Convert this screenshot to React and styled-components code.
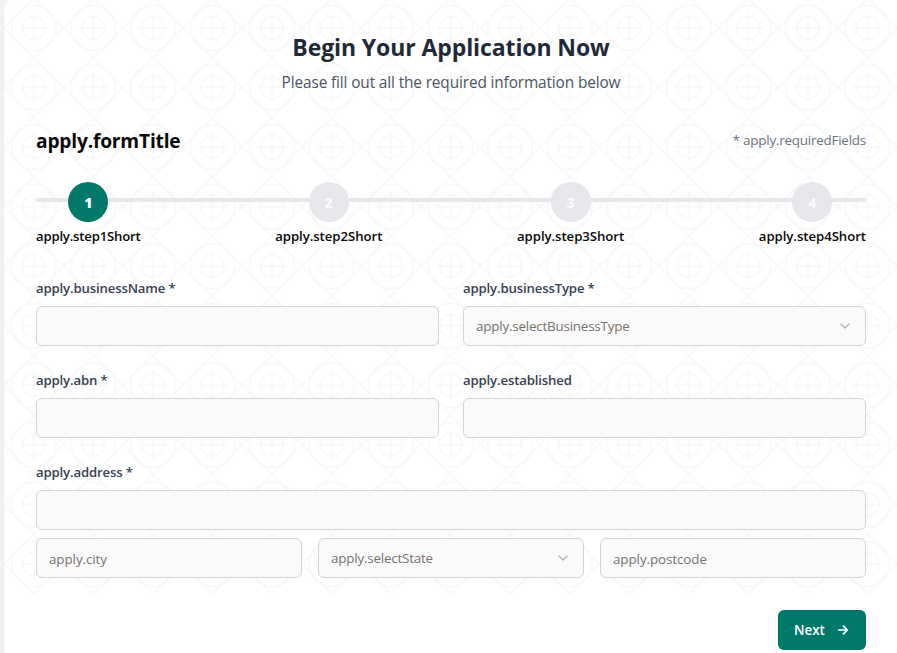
import React from 'react';
import styled, { createGlobalStyle } from 'styled-components';

const GlobalStyle = createGlobalStyle`
  *, *::before, *::after { box-sizing: border-box; }
  html, body { margin: 0; height: 653px; overflow: hidden; }
  body { background: #f3f4f6; font-family: 'Open Sans', 'Noto Sans', sans-serif; font-size: 13.4px; }
  h1, h2, p { margin: 0; }
  input, button { font: inherit; }
`;

const Card = styled.main`
  position: relative;
  margin-left: 4px;
  height: 653px;
  padding: 32px 31px 0 32px;
  background: #fff;
  border-top-left-radius: 8px;
  box-shadow: 0 4px 6px rgba(0, 0, 0, 0.06);
  overflow: hidden;
`;
const Backdrop = styled.svg`
  position: absolute;
  top: 0;
  left: 0;
  width: 893px;
  height: 595px;
  pointer-events: none;
`;
const Form = styled.form`
  position: relative;
  display: flex;
  flex-direction: column;
`;
const Intro = styled.header`
  display: flex;
  flex-direction: column;
  align-items: center;
  height: 92px;
`;
const Title = styled.h1`
  font-size: 23px;
  letter-spacing: -0.1px;
  line-height: 32px;
  margin-top: -1px;
  font-weight: 700;
  color: #1f2937;
  white-space: nowrap;
`;
const Subtitle = styled.p`
  margin-top: 8px;
  font-size: 15.4px;
  letter-spacing: -0.13px;
  line-height: 24px;
  color: #4b5563;
  white-space: nowrap;
`;
const FormHead = styled.div`
  display: flex;
  justify-content: space-between;
  align-items: center;
  height: 34px;
`;
const FormTitle = styled.h2`
  font-size: 19.2px;
  letter-spacing: -0.2px;
  line-height: 28px;
  font-weight: 700;
  color: #0a0a0a;
`;
const Required = styled.span`
  margin-top: -2px;
  letter-spacing: -0.21px;
  line-height: 20px;
  color: #6b7280;
`;
const Stepper = styled.ol`
  position: relative;
  display: flex;
  justify-content: space-between;
  list-style: none;
  margin: 24px 0 0;
  padding: 0;
  height: 64px;
  &::before {
    content: '';
    position: absolute;
    top: 16px;
    left: 0;
    right: 0;
    height: 4px;
    background: #e5e7eb;
  }
`;
const Step = styled.li`
  position: relative;
  display: flex;
  flex-direction: column;
  align-items: center;
`;
const StepDot = styled.span`
  display: flex;
  align-items: center;
  justify-content: center;
  width: 40px;
  height: 40px;
  padding-top: 1px;
  border-radius: 50%;
  background: ${(p) => (p.$active ? '#00796b' : '#e5e7eb')};
  color: ${(p) => (p.$active ? '#fff' : '#fafafa')};
  font-size: 14px;
  font-weight: 800;
`;
const StepLabel = styled.span`
  margin-top: 4px;
  font-size: 13.2px;
  letter-spacing: ${(p) => (p.$tight ? '-0.22px' : '-0.05px')};
  line-height: 20px;
  font-weight: 600;
  color: #0a0a0a;
`;
const Fields = styled.div`
  display: grid;
  grid-template-columns: 1fr 1fr;
  gap: 24px;
  margin-top: 32px;
`;
const Field = styled.div`
  display: flex;
  flex-direction: column;
  gap: 8px;
  grid-column: ${(p) => (p.$wide ? '1 / -1' : 'auto')};
`;
const Label = styled.label`
  font-size: 13.2px;
  letter-spacing: -0.16px;
  line-height: 20px;
  font-weight: 600;
  color: #374151;
`;
const Input = styled.input`
  width: 100%;
  height: 40px;
  padding: 2px 12px 0;
  border: 1px solid #d1d5db;
  border-radius: 6px;
  background: #fafafa;
  outline: none;
  &::placeholder { color: #78716c; opacity: 1; letter-spacing: -0.08px; }
`;
const Select = styled.div`
  display: flex;
  align-items: center;
  justify-content: space-between;
  height: 40px;
  padding: 0 12px;
  border: 1px solid #d1d5db;
  border-radius: 6px;
  background: #fafafa;
  color: #78716c;
  letter-spacing: -0.2px;
`;
const AddressRow = styled.div`
  display: grid;
  grid-template-columns: repeat(3, 1fr);
  gap: 16px;
`;
const Actions = styled.div`
  display: flex;
  justify-content: flex-end;
  margin-top: 32px;
`;
const NextButton = styled.button`
  display: flex;
  align-items: center;
  justify-content: space-between;
  width: 88px;
  height: 40px;
  padding: 0 15px 0 16px;
  border: 0;
  border-radius: 6px;
  background: #00796b;
  color: #fff;
  font-weight: 600;
`;

function Ornament() {
  return (
    <Backdrop aria-hidden="true">
      <defs>
        <pattern id="lattice" width="59.55" height="59.55" patternUnits="userSpaceOnUse" patternTransform="translate(0 -1.8)">
          <g fill="none" stroke="#f7f7f7" strokeWidth="1" transform="scale(1.48875)">
            <path d="M20 0 40 20 20 40 0 20Z" />
            <circle cx="20" cy="20" r="15" />
            <circle cx="20" cy="20" r="7.6" />
            <path d="M20 10v20M10 20h20" />
          </g>
        </pattern>
      </defs>
      <rect width="893" height="593.7" fill="url(#lattice)" />
    </Backdrop>
  );
}

function Chevron() {
  return (
    <svg width="16" height="16" viewBox="0 0 24 24" fill="none" stroke="#b5b1ae" strokeWidth="2" strokeLinecap="round" strokeLinejoin="round">
      <path d="m6 9 6 6 6-6" />
    </svg>
  );
}

function Arrow() {
  return (
    <svg width="16" height="16" viewBox="0 0 16 16" fill="none" stroke="#fff" strokeWidth="1.7" strokeLinecap="round" strokeLinejoin="round">
      <path d="M3.7 8h8.6M8.5 4.2 12.3 8l-3.8 3.8" />
    </svg>
  );
}

export default function App() {
  return (
    <>
      <GlobalStyle />
      <Card>
        <Ornament />
        <Form>
          <Intro>
            <Title>Begin Your Application Now</Title>
            <Subtitle>Please fill out all the required information below</Subtitle>
          </Intro>
          <FormHead>
            <FormTitle>apply.formTitle</FormTitle>
            <Required>* apply.requiredFields</Required>
          </FormHead>
          <Stepper>
            {[1, 2, 3, 4].map((n) => (
              <Step key={n}>
                <StepDot $active={n === 1}>{n}</StepDot>
                <StepLabel $tight={n === 1}>{`apply.step${n}Short`}</StepLabel>
              </Step>
            ))}
          </Stepper>
          <Fields>
            <Field>
              <Label>apply.businessName *</Label>
              <Input />
            </Field>
            <Field>
              <Label>apply.businessType *</Label>
              <Select>apply.selectBusinessType<Chevron /></Select>
            </Field>
            <Field>
              <Label>apply.abn *</Label>
              <Input />
            </Field>
            <Field>
              <Label>apply.established</Label>
              <Input />
            </Field>
            <Field $wide>
              <Label>apply.address *</Label>
              <Input />
              <AddressRow>
                <Input placeholder="apply.city" />
                <Select>apply.selectState<Chevron /></Select>
                <Input placeholder="apply.postcode" />
              </AddressRow>
            </Field>
          </Fields>
          <Actions>
            <NextButton type="button">Next<Arrow /></NextButton>
          </Actions>
        </Form>
      </Card>
    </>
  );
}
